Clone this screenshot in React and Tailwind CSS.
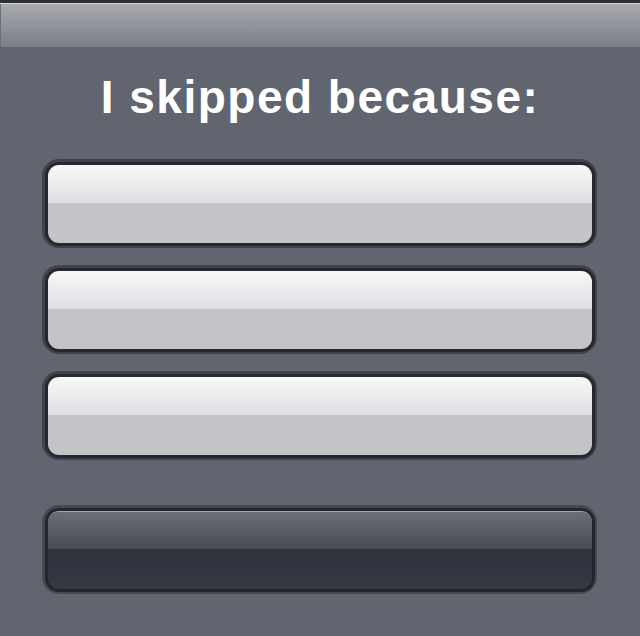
import React from "react";

function LightButton() {
  return (
    <div className="w-[555px] h-[89px] rounded-[17px] bg-[#40434c] pt-[3px] pl-[3px] pr-[2px] pb-[2px]">
      <div className="h-full rounded-[14px] bg-[#26282e] pt-[3px] pl-[3px] pr-[3px] pb-[3px]">
        <div className="h-full rounded-[11px] overflow-hidden flex flex-col">
          <div className="h-[38px] bg-gradient-to-b from-[#f8f8f9] to-[#dedfe2]" />
          <div className="flex-1 bg-[#c3c4c8]" />
        </div>
      </div>
    </div>
  );
}

function DarkButton() {
  return (
    <div className="w-[555px] h-[89px] rounded-[17px] bg-[#464952] pt-[3px] pl-[3px] pr-[2px] pb-[2px]">
      <div className="h-full rounded-[14px] bg-[#24262c] pt-[3px] pl-[3px] pr-[3px] pb-[3px]">
        <div className="h-full rounded-[11px] overflow-hidden flex flex-col border-t border-[#a3a6ab]">
          <div className="h-[37px] bg-gradient-to-b from-[#6c6f76] to-[#474b54]" />
          <div className="flex-1 bg-gradient-to-b from-[#2d323c] to-[#343943]" />
        </div>
      </div>
    </div>
  );
}

export default function App() {
  return (
    <div className="w-[640px] h-[636px] bg-[#61656f] overflow-hidden" style={{ fontFamily: '"Liberation Sans", Arial, sans-serif' }}>
      <div className="h-[47px] flex flex-col">
        <div className="h-[3px] bg-[#2f2f31]" />
        <div className="h-[1px] bg-[#d6d7da]" />
        <div className="flex-1 bg-gradient-to-b from-[#a9abb1] to-[#7a7d87] border-l border-[#6d7079]" />
      </div>
      <h1 className="mt-[27px] h-[46px] text-[46px] leading-none font-bold text-white text-center tracking-[1.5px]">
        I skipped because:
      </h1>
      <div className="mt-[39px] ml-[42px] flex flex-col gap-[17px]">
        <LightButton />
        <LightButton />
        <LightButton />
      </div>
      <div className="mt-[45px] ml-[42px]">
        <DarkButton />
      </div>
    </div>
  );
}
